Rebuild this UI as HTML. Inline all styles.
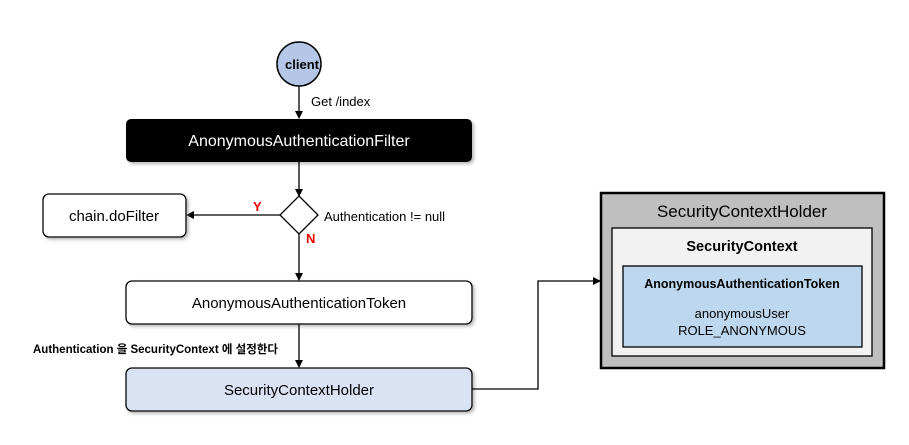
<!DOCTYPE html>
<html><head><meta charset="utf-8"><style>
body{margin:0;background:#fff;}
svg text{font-family:"Liberation Sans","Noto Sans CJK KR",sans-serif;}
</style></head><body>
<svg width="909" height="440" viewBox="0 0 909 440" xmlns="http://www.w3.org/2000/svg">
<defs><marker id="a" markerWidth="8" markerHeight="8" refX="7" refY="4" orient="auto" markerUnits="userSpaceOnUse"><path d="M0,0 L8,4 L0,8z" fill="#000"/></marker>
<filter id="s" x="-5%" y="-10%" width="115%" height="130%"><feDropShadow dx="2" dy="2" stdDeviation="1.5" flood-color="#888" flood-opacity="0.6"/></filter></defs>
<circle cx="299" cy="64" r="22" fill="#b4c7e7" stroke="#000" stroke-width="1.5"/>
<text x="302" y="69" font-size="13" font-weight="bold" text-anchor="middle">client</text>
<line x1="299" y1="86" x2="299" y2="118" stroke="#000" stroke-width="1.3" marker-end="url(#a)"/>
<text x="311" y="106" font-size="13">Get /index</text>
<rect x="126" y="119" width="346" height="43" rx="5" fill="#000" filter="url(#s)"/>
<text x="299" y="146" font-size="16" fill="#fff" text-anchor="middle">AnonymousAuthenticationFilter</text>
<line x1="299" y1="162" x2="299" y2="196" stroke="#000" stroke-width="1.3" marker-end="url(#a)"/>
<path d="M299,196 L318,215 L299,234 L280,215z" fill="#fff" stroke="#000" stroke-width="1.3"/>
<text x="324" y="221" font-size="13">Authentication != null</text>
<line x1="280" y1="215" x2="187" y2="215" stroke="#000" stroke-width="1.3" marker-end="url(#a)"/>
<text x="253" y="211" font-size="13" font-weight="bold" fill="#e00">Y</text>
<text x="306" y="243" font-size="13" font-weight="bold" fill="#e00">N</text>
<rect x="43" y="194" width="143" height="43" rx="6" fill="#fff" stroke="#000" stroke-width="1.3" filter="url(#s)"/>
<text x="114" y="221" font-size="15" text-anchor="middle">chain.doFilter</text>
<line x1="299" y1="234" x2="299" y2="280" stroke="#000" stroke-width="1.3" marker-end="url(#a)"/>
<rect x="126" y="281" width="346" height="43" rx="6" fill="#fff" stroke="#000" stroke-width="1.3" filter="url(#s)"/>
<text x="299" y="308" font-size="15" text-anchor="middle">AnonymousAuthenticationToken</text>
<line x1="299" y1="324" x2="299" y2="367" stroke="#000" stroke-width="1.3" marker-end="url(#a)"/>
<text x="33" y="353" font-size="11.5" font-weight="bold">Authentication 을 SecurityContext 에 설정한다</text>
<rect x="126" y="368" width="346" height="43" rx="6" fill="#dae3f3" stroke="#000" stroke-width="1.3" filter="url(#s)"/>
<text x="299" y="395" font-size="15" text-anchor="middle">SecurityContextHolder</text>
<path d="M472,389 L538,389 L538,281 L600,281" fill="none" stroke="#000" stroke-width="1.3" marker-end="url(#a)"/>
<rect x="601" y="193" width="283" height="175" fill="#bfbfbf" stroke="#000" stroke-width="2.5"/>
<text x="742" y="217" font-size="17" text-anchor="middle">SecurityContextHolder</text>
<rect x="612" y="228" width="260" height="128" fill="#f2f2f2" stroke="#000" stroke-width="1.3"/>
<text x="742" y="251" font-size="14.5" font-weight="bold" text-anchor="middle">SecurityContext</text>
<rect x="623" y="266" width="239" height="81" fill="#bdd7ee" stroke="#000" stroke-width="1.3"/>
<text x="742" y="288" font-size="12.5" font-weight="bold" text-anchor="middle">AnonymousAuthenticationToken</text>
<text x="742" y="318" font-size="13" text-anchor="middle">anonymousUser</text>
<text x="742" y="335" font-size="13" text-anchor="middle">ROLE_ANONYMOUS</text>
</svg>
</body></html>
